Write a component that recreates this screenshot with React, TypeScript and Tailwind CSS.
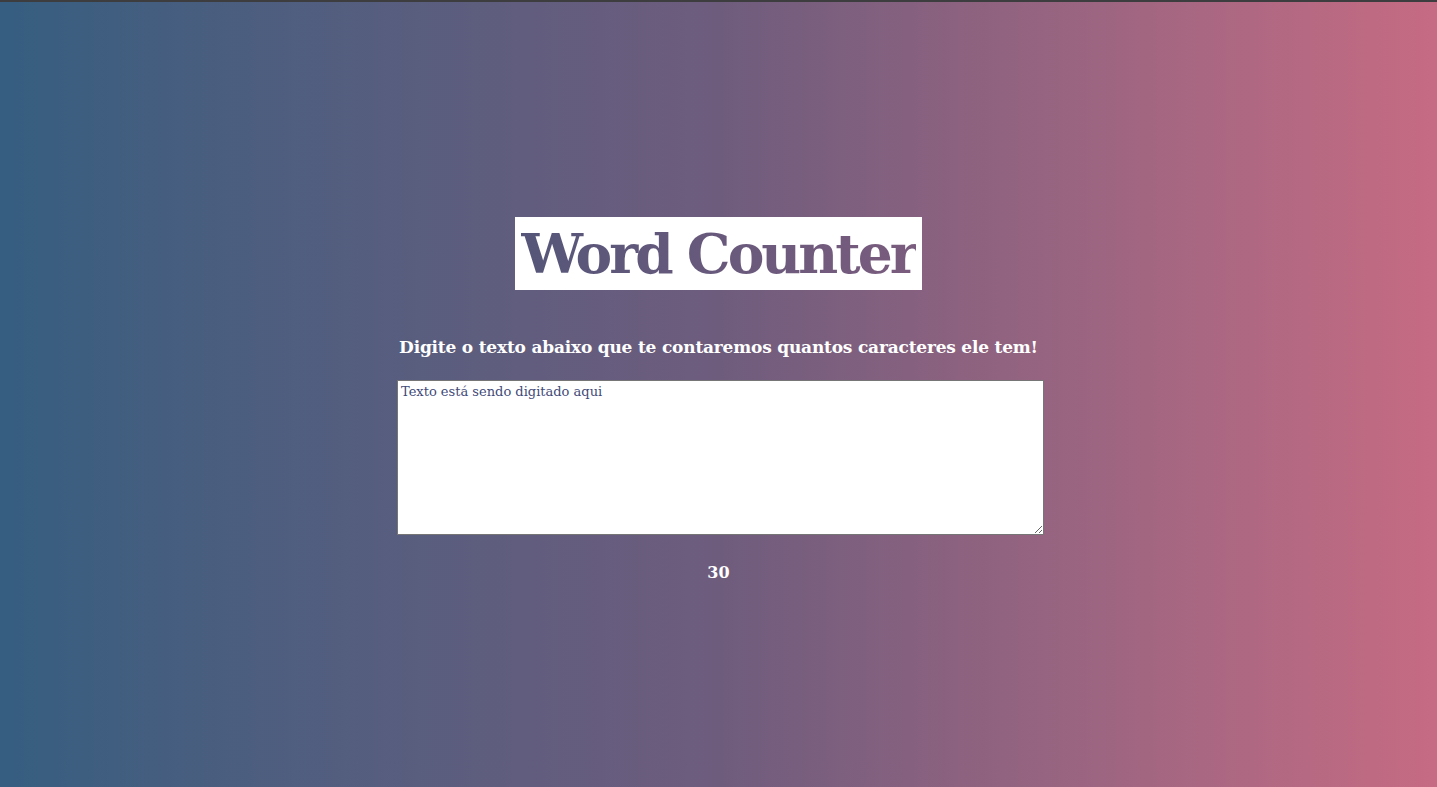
import { useState } from 'react';

export default function App() {
    const [text, setText] = useState('Texto está sendo digitado aqui');

    return (
        <div className="min-h-screen w-full border-t-2 border-[#3d3d40] bg-gradient-to-r from-[#355e80] via-[#6e5c7d] to-[#c66b83] flex flex-col items-center pt-[215px] font-['DejaVu_Serif',serif]">
            {/* Title */}
            <h1 className="bg-white h-[73px] px-[6px] flex items-center">
                <span className="text-[55px] font-bold leading-none tracking-[-3px] bg-gradient-to-r from-[#555679] to-[#7a5c7e] bg-clip-text text-transparent">
                    Word Counter
                </span>
            </h1>

            <p className="mt-[45px] text-white text-[17px] font-bold tracking-[-0.2px]">
                Digite o texto abaixo que te contaremos quantos caracteres ele tem!
            </p>

            <textarea
                value={text}
                onChange={e => setText(e.target.value)}
                className="mt-[19px] ml-[4px] w-[647px] h-[155px] bg-white border border-[#767676] px-[3px] py-[2px] text-[13px] leading-[18px] text-[#3f4a78] outline-none"
            />

            <span className="mt-[26px] text-white text-[16px] font-bold">
                {text.length}
            </span>
        </div>
    );
}
